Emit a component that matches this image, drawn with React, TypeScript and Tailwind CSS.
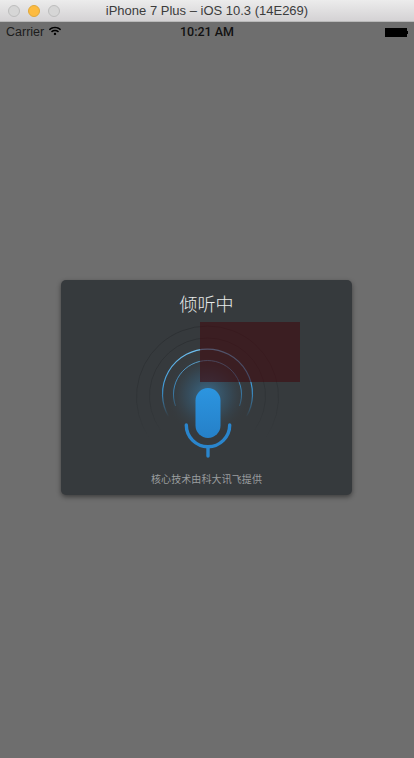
import { FaWifi } from "react-icons/fa"

const sansFont = "font-['Liberation_Sans','Noto_Sans_CJK_SC',sans-serif]"

function WindowTitleBar() {
  return (
    <div className="grid h-[22px] grid-cols-[1fr_auto_1fr] items-center border-b border-[#b9b9b9] bg-gradient-to-b from-[#ececec] to-[#d4d2d4]">
      <div className="flex items-center gap-[8px] pl-[8px]">
        <span className="h-[12px] w-[12px] rounded-full border border-[#bdbdbd] bg-[#d6d6d6]" />
        <span className="h-[12px] w-[12px] rounded-full border border-[#e0a83a] bg-[#fdbb40]" />
        <span className="h-[12px] w-[12px] rounded-full border border-[#bdbdbd] bg-[#d6d6d6]" />
      </div>
      <span className="text-[13px] text-[#3c3c3c]">iPhone 7 Plus – iOS 10.3 (14E269)</span>
      <span />
    </div>
  )
}

function StatusBar() {
  return (
    <div className="grid h-[20px] grid-cols-[1fr_auto_1fr] items-center px-[6px] text-[12.5px] text-black">
      <div className="flex items-center gap-[5px]">
        <span className="text-[#1c1c1c]">Carrier</span>
        <FaWifi className="h-[12px] w-[12px] -translate-y-[1px]" />
      </div>
      <span className="font-['Roboto',sans-serif] font-medium text-[#111111]">10:21 AM</span>
      <div className="flex items-center justify-end">
        <span className="h-[9px] w-[22px] bg-black" />
        <span className="h-[3px] w-[1px] bg-black" />
      </div>
    </div>
  )
}

function MicGraphic() {
  return (
    <svg width="150" height="145" viewBox="0 0 150 145" className="block">
      <defs>
        <radialGradient id="glow">
          <stop offset="0%" stopColor="#3f8fc4" stopOpacity="0.6" />
          <stop offset="55%" stopColor="#356f96" stopOpacity="0.25" />
          <stop offset="100%" stopColor="#363a3d" stopOpacity="0" />
        </radialGradient>
        <linearGradient id="micBody" x1="0" y1="0" x2="0" y2="1">
          <stop offset="0%" stopColor="#2c95e0" />
          <stop offset="100%" stopColor="#2580c8" />
        </linearGradient>
        <linearGradient id="ringFade" gradientUnits="userSpaceOnUse" x1="0" y1="34" x2="0" y2="102">
          <stop offset="0%" stopColor="#6fc0f0" />
          <stop offset="60%" stopColor="#3b93d0" />
          <stop offset="100%" stopColor="#3b93d0" stopOpacity="0" />
        </linearGradient>
        <linearGradient id="darkRing" gradientUnits="userSpaceOnUse" x1="0" y1="10" x2="0" y2="125">
          <stop offset="0%" stopColor="#2a2d30" />
          <stop offset="65%" stopColor="#2e3235" />
          <stop offset="100%" stopColor="#2e3235" stopOpacity="0" />
        </linearGradient>
      </defs>
      <circle cx="75.5" cy="80" r="42" fill="url(#glow)" />
      {/* outer rings stay faint, inner two carry the blue */}
      <path d="M17.5 123 A71 71 0 1 1 133.5 123" fill="none" stroke="url(#darkRing)" strokeWidth="0.8" />
      <path d="M28.5 115 A58 58 0 1 1 122.5 115" fill="none" stroke="url(#darkRing)" strokeWidth="0.8" />
      <path d="M36.5 101.5 A45 45 0 1 1 114.5 101.5" fill="none" stroke="url(#ringFade)" strokeWidth="1.2" />
      <path d="M43.5 91 A34 34 0 1 1 107.5 91" fill="none" stroke="url(#ringFade)" strokeWidth="0.8" />
      <rect x="63.5" y="73" width="25" height="50" rx="12.5" fill="url(#micBody)" />
      <path
        d="M54.3 110 A21.7 21.7 0 0 0 97.7 110"
        fill="none"
        stroke="#2a85cc"
        strokeWidth="3.4"
        strokeLinecap="round"
      />
      <path d="M76 132 V141" stroke="#2a85cc" strokeWidth="3.4" strokeLinecap="round" />
    </svg>
  )
}

function ListeningCard() {
  return (
    <div className="relative -ml-[1px] flex h-[215px] w-[291px] flex-col items-center overflow-hidden rounded-[5px] bg-[#363a3d] shadow-[0_2px_5px_rgba(0,0,0,0.45)]">
      <h1 className="mt-[12px] text-[18px] leading-[26px] font-light text-[#e8eaea]">倾听中</h1>
      <div className="-mt-[3px] h-[145px]">
        <MicGraphic />
      </div>
      <p className="mt-[13px] text-[10px] leading-[14px] tracking-[0.1px] text-[#9a9d9f]">核心技术由科大讯飞提供</p>
      <div className="absolute left-[139px] top-[42px] h-[60px] w-[100px] bg-[#400c10]/60" />
    </div>
  )
}

export default function App() {
  return (
    <div className={`flex h-[758px] w-[414px] flex-col overflow-hidden bg-[#6e6e6e] ${sansFont}`}>
      <WindowTitleBar />
      <StatusBar />
      <div className="flex flex-1 justify-center pt-[238px]">
        <ListeningCard />
      </div>
    </div>
  )
}
